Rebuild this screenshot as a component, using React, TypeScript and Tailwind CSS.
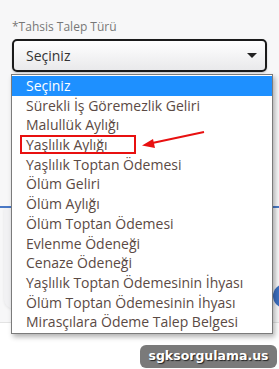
const options = [
  "Seçiniz",
  "Sürekli İş Göremezlik Geliri",
  "Malullük Aylığı",
  "Yaşlılık Aylığı",
  "Yaşlılık Toptan Ödemesi",
  "Ölüm Geliri",
  "Ölüm Aylığı",
  "Ölüm Toptan Ödemesi",
  "Evlenme Ödeneği",
  "Cenaze Ödeneği",
  "Yaşlılık Toptan Ödemesinin İhyası",
  "Ölüm Toptan Ödemesinin İhyası",
  "Mirasçılara Ödeme Talep Belgesi",
];

export default function App() {
  return (
    <div
      className="relative h-[369px] w-[279px] overflow-hidden bg-[#f7f7f8]"
      style={{ fontFamily: '"Open Sans", "Noto Sans", sans-serif' }}
    >
      {/* page behind the open list */}
      <div className="flex h-full flex-col">
        <div className="px-3 pt-[18px]">
          <p className="text-[12px] leading-[18px] text-[#777]">*Tahsis Talep Türü</p>
          <div className="mt-[3px] flex h-[33px] items-center justify-between rounded-[5px] border-2 border-[#1b1b1b] bg-gradient-to-b from-white to-[#e9e9eb] pl-[12px] pr-[8px] shadow-[0_1px_2px_rgba(0,0,0,0.2)]">
            <span className="text-[14px] text-[#333]">Seçiniz</span>
            <span className="h-0 w-0 border-x-[5px] border-t-[5px] border-x-transparent border-t-[#222]" />
          </div>
        </div>
        <div className="mt-[134px] h-[2px] w-full bg-[#4a79c6]" />
        <div className="mx-[4px] flex h-[101px] justify-end rounded-b-[10px] bg-[#f1f1f3] shadow-[0_1px_3px_rgba(0,0,0,0.08)]">
          <div className="mr-[-22px] mt-[76px] h-[24px] w-[24px] rounded-full bg-[#3d6fc0]" />
        </div>
        <div className="mt-[13px] flex-1 border-t border-[#e3e3e3] bg-white" />
      </div>

      {/* open option list */}
      <ul className="absolute left-[11px] top-[74px] w-[262px] border border-[#7b7b7b] bg-white py-[1px] shadow-[2px_3px_5px_rgba(0,0,0,0.3)]">
        {options.map((o, i) => (
          <li
            key={o}
            className={
              i === 0
                ? "h-[19.7px] bg-[#1e90ff] pl-[14px] text-[14px] leading-[19.7px] text-white"
                : "h-[19.7px] pl-[14px] text-[14px] leading-[19.7px] text-[#5b4a44]"
            }
          >
            {o}
          </li>
        ))}
      </ul>

      {/* annotation */}
      <div className="absolute left-[20px] top-[135px] h-[19px] w-[116px] border-2 border-[#e81010]" />
      <svg className="absolute left-0 top-0" width="279" height="369">
        <line x1="204" y1="132" x2="150" y2="143.5" stroke="#e81010" strokeWidth="2" />
        <polygon points="142,145.5 153,139 155,148" fill="#e81010" />
      </svg>

      {/* watermark */}
      <div className="absolute left-[140px] top-[345px] flex h-[23px] w-[137px] items-center justify-center rounded-[6px] bg-[#7a7a7a]">
        <span
          className="text-[12.5px] font-bold text-white [text-shadow:1px_1px_1px_#222]"
          style={{ fontFamily: '"DejaVu Sans", sans-serif' }}
        >
          sgksorgulama.us
        </span>
      </div>
    </div>
  );
}
